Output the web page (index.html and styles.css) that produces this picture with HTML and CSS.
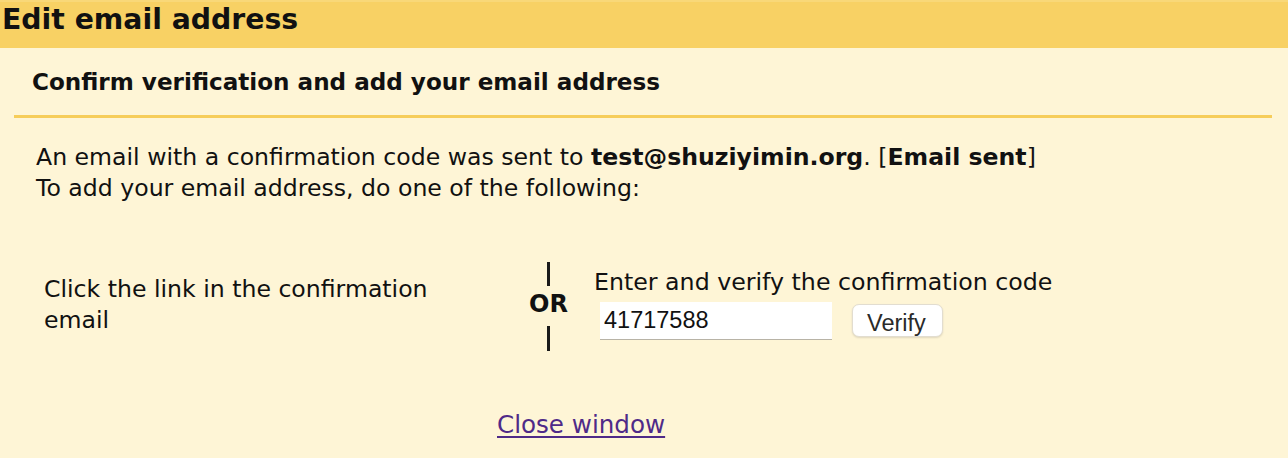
FILE: index.html
```html
<!DOCTYPE html>
<html lang="en">
<head>
<meta charset="utf-8">
<title>Edit email address</title>
<link rel="stylesheet" href="styles.css">
</head>
<body>
<div class="header"><h1 class="title">Edit email address</h1></div>
<div class="section">
  <h2 class="subtitle">Confirm verification and add your email address</h2>
  <p class="intro">An email with a confirmation code was sent to <b>test@shuziyimin.org</b>. [<b>Email sent</b>]<br>To add your email address, do one of the following:</p>
  <div class="options">
    <div class="opt-left">Click the link in the confirmation email</div>
    <div class="opt-or">
      <span class="bar bar-top"></span>
      <span class="or-text">OR</span>
      <span class="bar bar-bottom"></span>
    </div>
    <div class="opt-right">
      <div class="opt-label">Enter and verify the confirmation code</div>
      <div class="code-row">
        <input class="code-input" type="text" value="41717588">
        <button class="verify-btn" type="button">Verify</button>
      </div>
    </div>
  </div>
  <div class="close-row"><a class="close-link" href="#">Close window</a></div>
</div>
</body>
</html>
```

FILE: styles.css
```css
html, body {
  margin: 0;
  padding: 0;
}
body {
  background: #fef5d6;
  color: #111;
  font-family: "DejaVu Sans", "Liberation Sans", sans-serif;
  width: 1288px;
  height: 458px;
  overflow: hidden;
}
.header {
  background: #f8d164;
  height: 48px;
  box-sizing: border-box;
  padding-left: 2px;
  border-top: 2px solid #f9d878;
}
.title {
  margin: 0;
  font-size: 28.3px;
  font-weight: bold;
  line-height: 36px;
}
.section {
  margin: 0 16px 0 14px;
}
.subtitle {
  margin: 0;
  padding: 19px 0 18px 18px;
  font-size: 23.1px;
  font-weight: bold;
  line-height: 30px;
  border-bottom: 3px solid #f6cd5a;
}
.intro {
  margin: 24px 0 0 22px;
  font-size: 23.6px;
  line-height: 31px;
}
.intro b {
  font-weight: bold;
}
.options {
  display: flex;
  align-items: flex-start;
  margin-top: 58px;
  padding-left: 30px;
}
.opt-left {
  width: 440px;
  margin-top: 12px;
  margin-right: 44px;
  font-size: 23.6px;
  line-height: 31px;
}
.opt-or {
  width: 41px;
  display: flex;
  flex-direction: column;
  align-items: center;
  margin-right: 25px;
}
.bar {
  display: block;
  width: 3px;
  background: #1a1a1a;
}
.bar-top {
  height: 24px;
}
.bar-bottom {
  height: 25px;
}
.or-text {
  display: block;
  font-size: 24px;
  font-weight: bold;
  line-height: 24px;
  margin: 6px 0 10px;
}
.opt-right {
  margin-top: 7px;
}
.opt-label {
  font-size: 23.7px;
  line-height: 26px;
}
.code-row {
  display: flex;
  align-items: flex-start;
  margin-top: 7px;
  margin-left: 6px;
  gap: 20px;
}
.code-input {
  width: 232px;
  height: 38px;
  box-sizing: border-box;
  border: none;
  border-bottom: 1px solid #b8b3a6;
  background: #fff;
  padding: 0 4px;
  margin: 0;
  font-family: "Liberation Sans", Arial, sans-serif;
  font-size: 23.5px;
  color: #111;
}
.verify-btn {
  height: 33px;
  box-sizing: border-box;
  padding: 5px 16px 0 14px;
  margin: 2px 0 0;
  border: 1px solid #e2ddd0;
  border-radius: 7px;
  background: #fff;
  box-shadow: 0 1px 2px rgba(0, 0, 0, 0.12);
  font-family: "Liberation Sans", Arial, sans-serif;
  font-size: 23.5px;
  line-height: 26px;
  color: #2a2a2a;
}
.close-row {
  margin-top: 59px;
  padding-left: 483px;
}
.close-link {
  font-size: 24.6px;
  line-height: 30px;
  color: #4f2a88;
  text-decoration: underline;
  text-decoration-thickness: 2px;
  text-underline-offset: 3px;
}
```
